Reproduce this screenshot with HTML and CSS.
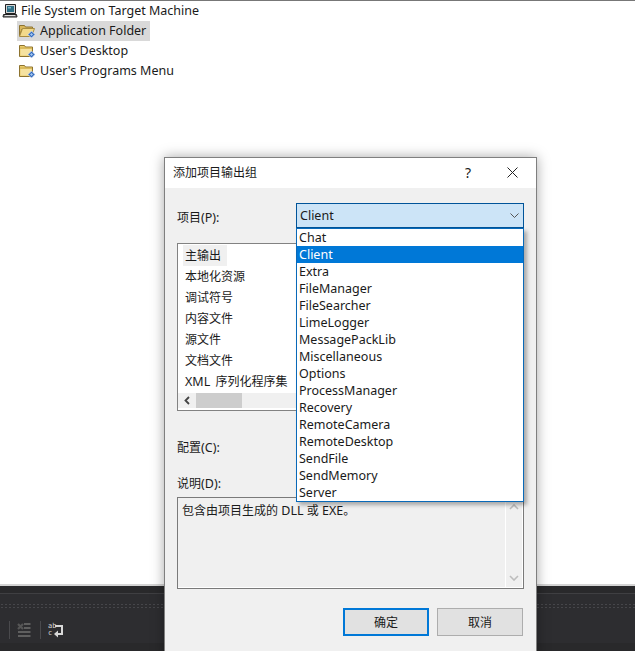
FILE: index.html
```html
<!DOCTYPE html>
<html lang="zh">
<head>
<meta charset="utf-8">
<title>添加项目输出组</title>
<link rel="stylesheet" href="styles.css">
</head>
<body>
<div class="app">
  <main class="tree">
    <div class="tree-row root">
      <svg class="ico" viewBox="0 0 16 16"><path d="M3.500 2.500h10v9h-10z" fill="#d4d4d4" stroke="#222"/><path d="M5 4h7v6H5z" fill="#2f6f86"/><path d="M6 5h3v1.500H6z" fill="#7fb6c8"/><path d="M1.500 12.500h13l.5 2.500H1z" fill="#8a8a8a" stroke="#222"/><path d="M3 13.500h10" stroke="#e0e0e0"/></svg>
      <span>File System on Target Machine</span>
    </div>
    <div class="tree-row child"><span class="item selected">
      <svg class="ico" viewBox="0 0 16 16"><path d="M.5 6V3.500h5l1 1.500h7v2H3L.5 14z" fill="#d8b65a" stroke="#8d7330"/><path d="M.5 14.500l3-8h12l-3 8z" fill="#f2d98a" stroke="#a88c40"/><path d="M12.500 9l3.500 3.500-3.500 3.500L9 12.500z" fill="#2f69c0" stroke="#dfe8f6" stroke-width=".7"/><path d="M12.500 11l1.500 1.500-1.500 1.500-1.500-1.500z" fill="#a9c8ee"/></svg>
      <span>Application Folder</span></span></div>
    <div class="tree-row child"><span class="item">
      <svg class="ico" viewBox="0 0 16 16"><path d="M.5 14.500v-11h5l1 1.500h7v9.500z" fill="#eccd6c" stroke="#8d7330"/><path d="M1.500 7h11v6.500h-11z" fill="#f6e2a0"/><path d="M1 6h12" stroke="#c7a94f"/><path d="M12.500 9l3.500 3.500-3.500 3.500L9 12.500z" fill="#2f69c0" stroke="#dfe8f6" stroke-width=".7"/><path d="M12.500 11l1.500 1.500-1.500 1.500-1.500-1.500z" fill="#a9c8ee"/></svg>
      <span>User's Desktop</span></span></div>
    <div class="tree-row child"><span class="item">
      <svg class="ico" viewBox="0 0 16 16"><path d="M.5 14.500v-11h5l1 1.500h7v9.500z" fill="#eccd6c" stroke="#8d7330"/><path d="M1.500 7h11v6.500h-11z" fill="#f6e2a0"/><path d="M1 6h12" stroke="#c7a94f"/><path d="M12.500 9l3.500 3.500-3.500 3.500L9 12.500z" fill="#2f69c0" stroke="#dfe8f6" stroke-width=".7"/><path d="M12.500 11l1.500 1.500-1.500 1.500-1.500-1.500z" fill="#a9c8ee"/></svg>
      <span>User's Programs Menu</span></span></div>
  </main>
  <footer class="dock">
    <div class="dock-rule"></div>
    <div class="dock-dots"></div>
    <div class="dock-tools">
      <span class="sep"></span>
      <svg class="tool" viewBox="0 0 14 16"><path d="M1 2l5 5M6 2L1 7" stroke="#565656" stroke-width="2.200"/><path d="M7 2h6.500M7 6h6.500M1 10h12.500M1 14h12.500" stroke="#5f5f5f" stroke-width="2"/></svg>
      <span class="sep"></span>
      <svg class="tool wrap" viewBox="0 0 16 18"><text x="0" y="7" class="tool-text">ab</text><text x="0" y="14" class="tool-text">c</text><path d="M7 5h7v8H9" fill="none" stroke="#d8d8d8" stroke-width="2"/><path d="M10 9.500v7L6 13z" fill="#d8d8d8"/></svg>
    </div>
    <div class="dock-end"></div>
  </footer>
  <section class="dialog">
    <header class="title">
      <span class="title-text cjk">添加项目输出组</span>
      <span class="help">?</span>
      <svg class="close" viewBox="0 0 11 11"><path d="M.5.500l10 10M10.500.500l-10 10" stroke="#222" fill="none"/></svg>
    </header>
    <div class="body">
      <div class="row project">
        <label><span class="cjk">项目</span>(P):</label>
        <div class="combo"><span>Client</span>
          <svg class="chev" viewBox="0 0 9 5"><path d="M.5.500l4 4 4-4" fill="none" stroke="#555"/></svg>
        </div>
      </div>
      <div class="groups">
        <ul class="group-list">
          <li class="current cjk">主输出</li>
          <li class="cjk">本地化资源</li>
          <li class="cjk">调试符号</li>
          <li class="cjk">内容文件</li>
          <li class="cjk">源文件</li>
          <li class="cjk">文档文件</li>
          <li class="xml">XML <span class="cjk">序列化程序集</span></li>
        </ul>
        <div class="hscroll">
          <svg class="arrow" viewBox="0 0 18 15"><path d="M11 4L7.500 7.500 11 11" fill="none" stroke="#444" stroke-width="1.800"/></svg>
          <span class="thumb"></span>
        </div>
      </div>
      <label class="config"><span class="cjk">配置</span>(C):</label>
      <label class="desc-label"><span class="cjk">说明</span>(D):</label>
      <div class="desc">
        <p><span class="cjk">包含由项目生成的</span> DLL <span class="cjk">或</span> EXE<span class="cjk">。</span></p>
        <div class="vscroll">
          <svg viewBox="0 0 10 6"><path d="M1 5l4-4 4 4" fill="none" stroke="#bdbdbd" stroke-width="1.600"/></svg>
          <svg viewBox="0 0 10 6"><path d="M1 1l4 4 4-4" fill="none" stroke="#bdbdbd" stroke-width="1.600"/></svg>
        </div>
      </div>
      <div class="buttons">
        <button class="btn primary cjk">确定</button>
        <button class="btn cjk">取消</button>
      </div>
    </div>
    <ul class="dropdown">
      <li>Chat</li>
      <li class="active">Client</li>
      <li>Extra</li>
      <li>FileManager</li>
      <li>FileSearcher</li>
      <li>LimeLogger</li>
      <li>MessagePackLib</li>
      <li>Miscellaneous</li>
      <li>Options</li>
      <li>ProcessManager</li>
      <li>Recovery</li>
      <li>RemoteCamera</li>
      <li>RemoteDesktop</li>
      <li>SendFile</li>
      <li>SendMemory</li>
      <li>Server</li>
    </ul>
  </section>
</div>
</body>
</html>
```
FILE: styles.css
```css
* { box-sizing: border-box; }
html, body { margin: 0; padding: 0; }
body {
  width: 635px; height: 651px; overflow: hidden;
  font-family: "Noto Sans", "Noto Sans CJK SC", sans-serif;
  font-size: 12.500px; color: #1a1a1a; background: #fff;
}
ul { list-style: none; margin: 0; padding: 0; }
label { display: block; }
.cjk { font-size: 12px; }
.app { position: relative; width: 635px; height: 651px; display: flex; flex-direction: column; overflow: hidden; }

.tree { height: 586px; padding-top: 1px; background: #fff; border-bottom: 2px solid #d4d4d4; box-shadow: inset 0 1px 0 #777; }
.tree-row { height: 20px; display: flex; align-items: center; }
.root { padding: 0 0 2px 2px; gap: 3px; }
.child { padding-left: 17px; }
.item { display: flex; align-items: center; gap: 5px; height: 20px; padding: 0 4px 2px 2px; }
.selected { background: #d9d9d9; }
.ico { width: 16px; height: 16px; flex: none; }

.dock { flex: 1; background: #2d2d30; display: flex; flex-direction: column; }
.dock-rule { height: 8px; border-bottom: 1px solid #3f3f42; background: #29292b; }
.dock-dots { height: 6px; margin-top: 9px; background-image: radial-gradient(#46464a 0.7px, transparent 0.8px); background-size: 4px 3px; }
.dock-tools { height: 18px; margin-top: 12px; padding-left: 9px; display: flex; align-items: center; }
.sep { width: 1px; height: 18px; background: #4a4a4d; }
.tool { width: 14px; height: 16px; margin: 0 9px 0 7px; }
.wrap { width: 16px; height: 18px; margin: 0 0 0 7px; }
.tool-text { font-size: 7px; fill: #d8d8d8; font-family: "DejaVu Sans Mono", monospace; }
.dock-end { height: 8px; margin-top: 4px; background: #29292b; }

.dialog {
  position: absolute; left: 164px; top: 157px; width: 373px; height: 500px;
  background: #f0f0f0; border: 1px solid #7f7f7f;
  box-shadow: 0 0 12px rgba(0,0,0,.35);
}
.title { height: 30px; background: #fff; display: flex; align-items: center; padding: 0 18px 2px 8px; }
.title-text { flex: 1; }
.help { width: 18px; margin-right: 30px; font-size: 14px; text-align: center; }
.close { width: 11px; height: 11px; }

.body { padding: 15px 12px 0; }
.row { display: flex; align-items: center; }
.project label { width: 119px; padding-top: 2px; }
.combo {
  width: 228px; height: 25px; padding: 0 4px 0 3px;
  display: flex; align-items: center; justify-content: space-between;
  background: #cce4f7; border: 1px solid #005499;
}
.chev { width: 9px; height: 5px; }
.groups { width: 130px; height: 168px; margin-top: 15px; border: 1px solid #828282; background: #fff; display: flex; flex-direction: column; }
.group-list { flex: 1; padding-top: 1px; padding-left: 5px; }
.group-list li { height: 21px; line-height: 21px; white-space: nowrap; padding-left: 2px; }
.group-list .current { width: 44px; background: #f0f0f0; }
.group-list .xml { word-spacing: 2px; }
.hscroll { height: 15px; margin-bottom: 2px; display: flex; background: #f0f0f0; flex: none; }
.arrow { width: 18px; height: 15px; }
.thumb { width: 46px; background: #cdcdcd; }
.config { margin-top: 28px; height: 17px; line-height: 17px; }
.desc-label { margin-top: 19px; height: 17px; line-height: 17px; }
.desc { width: 347px; height: 92px; margin-top: 5px; border: 1px solid #7a7a7a; background: #f0f0f0; display: flex; box-shadow: inset -1px -1px 0 #fff; }
.desc p { margin: 0; flex: 1; padding: 3px 4px; }
.vscroll { width: 18px; margin-bottom: 1px; border-left: 1px solid #fff; display: flex; flex-direction: column; justify-content: space-between; padding: 6px 3px; }
.vscroll svg { width: 10px; height: 6px; }
.buttons { display: flex; justify-content: flex-end; gap: 8px; margin-top: 19px; width: 346px; }
.btn { width: 86px; height: 28px; padding: 0; font-family: inherit; color: #1a1a1a; background: #e1e1e1; border: 1px solid #adadad; }
.primary { border: 2px solid #0078d7; }

.dropdown {
  position: absolute; left: 131px; top: 70px; width: 228px; height: 274px;
  background: #fff; border: 1px solid #0969b8;
  box-shadow: 3px 3px 4px rgba(0,0,0,.3);
}
.dropdown li { height: 17px; line-height: 17px; padding-left: 2px; }
.dropdown .active { background: #0078d7; color: #fff; }
```
